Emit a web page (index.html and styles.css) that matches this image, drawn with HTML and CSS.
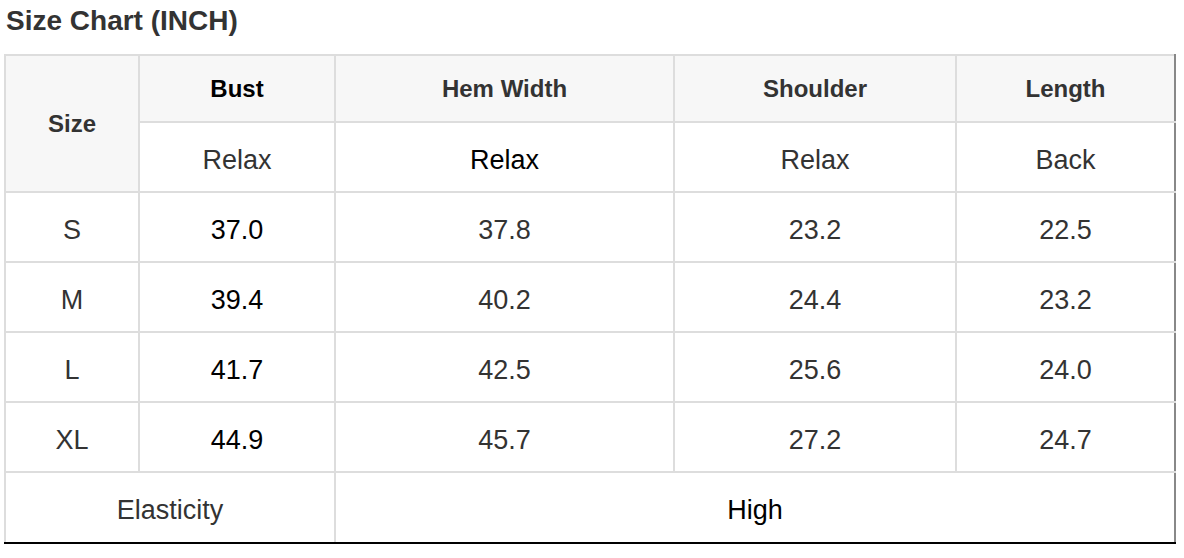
FILE: index.html
```html
<!DOCTYPE html>
<html>
<head>
<meta charset="utf-8">
<link rel="stylesheet" href="styles.css">
</head>
<body>
<div class="page">
  <h1 class="title">Size Chart (INCH)</h1>
  <table class="chart">
    <colgroup>
      <col class="c1"><col class="c2"><col class="c3"><col class="c4"><col class="c5">
    </colgroup>
    <tr class="head">
      <th rowspan="2" class="size-h">Size</th>
      <th class="dark">Bust</th>
      <th>Hem Width</th>
      <th>Shoulder</th>
      <th class="r">Length</th>
    </tr>
    <tr class="sub">
      <td>Relax</td>
      <td class="dark">Relax</td>
      <td>Relax</td>
      <td class="r">Back</td>
    </tr>
    <tr class="row">
      <td>S</td><td class="dark">37.0</td><td>37.8</td><td>23.2</td><td class="r">22.5</td>
    </tr>
    <tr class="row">
      <td>M</td><td class="dark">39.4</td><td>40.2</td><td>24.4</td><td class="r">23.2</td>
    </tr>
    <tr class="row">
      <td>L</td><td class="dark">41.7</td><td>42.5</td><td>25.6</td><td class="r">24.0</td>
    </tr>
    <tr class="row">
      <td>XL</td><td class="dark">44.9</td><td>45.7</td><td>27.2</td><td class="r">24.7</td>
    </tr>
    <tr class="foot">
      <td colspan="2">Elasticity</td>
      <td colspan="3" class="dark r">High</td>
    </tr>
  </table>
</div>
</body>
</html>
```

FILE: styles.css
```css
html, body {
  margin: 0;
  padding: 0;
  background: #fff;
}

.page {
  padding: 5px 0 0 4px;
  font-family: "Liberation Sans", Arial, Helvetica, sans-serif;
  color: #333;
}

.title {
  margin: 0 0 17px 2px;
  font-size: 28px;
  line-height: 32px;
  font-weight: bold;
  color: #333;
}

.chart {
  border-collapse: collapse;
  table-layout: fixed;
  width: 1170px;
  margin-left: 0;
  border: 2px solid #ddd;
}

.c1 { width: 134px; }
.c2 { width: 196px; }
.c3 { width: 339px; }
.c4 { width: 282px; }
.c5 { width: 219px; }

.chart th,
.chart td {
  border: 2px solid #ddd;
  padding: 0;
  text-align: center;
  vertical-align: middle;
  color: #333;
}

.chart th {
  font-size: 24px;
  font-weight: bold;
  background: #f7f7f7;
}

.chart td {
  font-size: 27px;
  font-weight: normal;
  padding-top: 6px;
}

.chart .dark {
  color: #000;
}

.chart .r {
  border-right-color: #888;
}

.head th {
  height: 65px;
}

.sub td,
.row td {
  height: 62px;
}

.foot td {
  height: 63px;
  border-bottom-color: #000;
}
```
